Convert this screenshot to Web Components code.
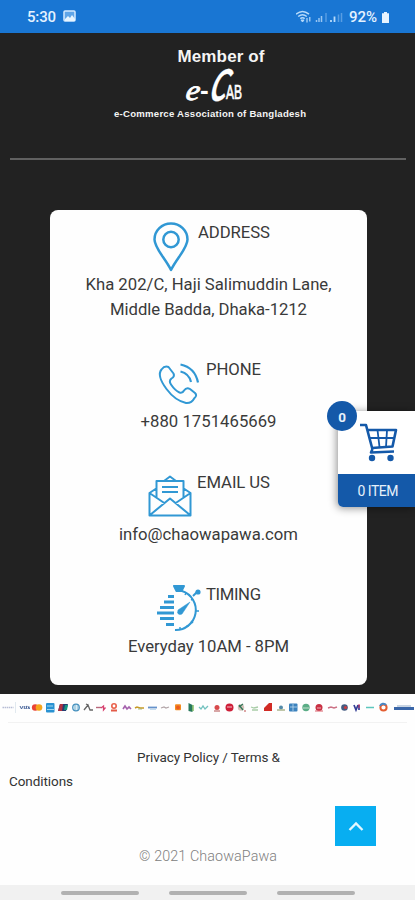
<!DOCTYPE html>
<html lang="en">
<head>
<meta charset="utf-8">
<title>ChaowaPawa</title>
<style>
html,body{margin:0;padding:0;height:900px;overflow:hidden;background:#fefefe;font-family:Roboto,"Liberation Sans",sans-serif;color:#333}
</style>
</head>
<body>
<app-screen></app-screen>
<script>
const define = (name, html, ready) => {
  const t = document.createElement('template');
  t.innerHTML = html;
  customElements.define(name, class extends HTMLElement {
    constructor() { super(); this.attachShadow({mode: 'open'}).append(t.content.cloneNode(true)); }
    connectedCallback() { if (ready) ready(this, this.shadowRoot); }
  });
};

// One line of text, tracked so that it spans the width given in "w".
define('fit-line', `<style>:host{display:block;white-space:nowrap;width:max-content}span{display:inline-block}</style><span><slot></slot></span>`, (el, root) => {
  const s = root.querySelector('span');
  const w = Number(el.getAttribute('w')), n = el.textContent.trim().length;
  const now = s.getBoundingClientRect().width;
  s.style.letterSpacing = ((w - now) / (n - 1)) + 'px';
  s.style.marginRight = (-(w - now) / (n - 1)) + 'px';
});

define('status-bar', `<style>
:host{display:flex;box-sizing:border-box;height:32.5px;padding:2px 25px 0 27px;background:#1976d3;color:#e4f2ff;align-items:center;justify-content:space-between;font-size:15px;font-weight:500}
div{display:flex;align-items:center}svg{display:block}
</style>
<div style="gap:7px"><fit-line w="29">5:30</fit-line>
<svg width="13" height="12" viewBox="0 0 13 12" style="margin-top:-2px"><rect x="1" y="1" width="11" height="10" rx="1" fill="#5fa5e8" stroke="#d5eaff" stroke-width="1.5"/><path d="M2 9l3-3 2 2 2-3 3 4v2H2z" fill="#e8f5ff"/></svg></div>
<div><svg width="49" height="16" viewBox="0 0 49 16" style="margin-right:4px" fill="none" stroke="#b6dafa">
<path d="M0 5.2Q6.5-.2 13 5.2M2.200 7.5Q6.5 4 10.800 7.5M4.300 9.6Q6.5 8 8.700 9.6" stroke-width="1.5"/><path d="M5 11h3l-1.5 2z" fill="#b6dafa"/><path d="M11 9v4.5M13.8 8v4.5" stroke-width="1.2"/>
<path d="M20.5 13v-2M23 13V9M25.5 13V7" stroke-width="1.5" opacity=".8"/><path d="M30 13V4" opacity=".45" stroke-width="1.3"/>
<path d="M35 13v-2M38.500 13V7.5" stroke-width="1.8"/><path d="M42.500 13V5.5M45.500 13V4" opacity=".4" stroke-width="1.5"/></svg>
<fit-line w="28">92%</fit-line>
<svg width="9" height="13" viewBox="0 0 9 13" style="margin-left:4px"><path d="M3 1h3v1.2h2V12H1V2.2h2z" fill="#e8f4ff"/></svg></div>`);

define('member-banner', `<style>
:host{display:flex;flex-direction:column;align-items:center;box-sizing:border-box;height:127.5px;padding-top:13px;margin:0 9px 0 10px;border-bottom:2px solid #616161;color:#f5f5f5;font-family:"Liberation Sans",sans-serif;font-weight:700}
.a{font-size:17px;line-height:21px;margin-left:26px}.c{font-size:9.6px;line-height:13px;margin-left:4px}
svg{display:block;margin-left:12px;overflow:visible}
</style>
<fit-line class="a" w="87">Member of</fit-line>
<svg width="60" height="40" viewBox="0 0 60 40" fill="#fff" stroke="#fff">
<text transform="translate(1 33) skewX(-8)" font-family="Liberation Serif" font-style="italic" font-weight="400" font-size="29" stroke-width=".9" textLength="14" lengthAdjust="spacingAndGlyphs">e</text>
<text x="16" y="32" font-family="Liberation Sans" font-weight="700" font-size="26" stroke-width="0">-</text>
<text transform="translate(24 34) skewX(-16) scale(.62 1)" font-family="Lato" font-style="italic" font-weight="700" font-size="44" stroke-width=".3">C</text>
<text x="42" y="32" font-family="Liberation Sans" font-weight="400" font-size="20" stroke-width=".7" textLength="16" lengthAdjust="spacingAndGlyphs">AB</text></svg>
<fit-line class="c" w="192">e-Commerce Association of Bangladesh</fit-line>`);

const ICONS = {
pin: `<svg width="36" height="50" viewBox="0 0 36 50" stroke-width="2.5"><path d="M18 48C12 36 1.5 26 1.5 17.5a16.5 16 0 0 1 33 0C34.5 26 24 36 18 48z"/><circle cx="18" cy="17.5" r="7.7"/></svg>`,
phone: `<svg width="41" height="42" viewBox="0 0 41 42" stroke-width="2"><path d="M3.5 6.5Q6.5 2.5 10.5 4L15.5 10.5Q17 13.5 13.5 15.5Q10.5 18 13 21.5Q17 27.5 21.5 29.5Q24.5 30.5 26 27.5Q28.5 24 32 26L37 30Q39.5 32.5 36.5 35Q33.5 40.5 28 40Q17 37.5 8.5 26Q-1.5 12.5 3.5 6.5z"/><path d="M22.5 1.5Q37 4.5 40 19.5M22.5 8.5Q31 10.5 33 19" stroke-width="2.2"/></svg>`,
mail: `<svg width="44" height="42" viewBox="0 0 44 42" stroke-width="2"><path d="M9 13L1.5 18V40.5H42.5V18L35 13M1.5 18L17 28.5M42.5 18L27 28.5M2 40L22 23.5L42 40M8.5 22.5V6H35.5V22.5M16 6L22 1.5L28 6M14 12H30M14 17H30"/></svg>`,
watch: `<svg width="46" height="48" viewBox="0 0 46 48" stroke-width="2"><path d="M18 2H28L25.5 7H20.5z" fill="#3198d4"/><path d="M26 7A20 20 0 0 1 19 46" stroke-width="2"/><path d="M37 12L41 8" stroke-width="2"/><circle cx="42" cy="8" r="1.6" fill="#3198d4"/><path d="M12 12.5H18M8 18H18M4 23.5H18M1 29H18M4 34.5H18M10 40.5H18" stroke-width="2.8"/><path d="M22 26L34 18L26 30Q23 31.5 21.5 29z" fill="#3198d4" stroke-width=".5"/><path d="M43 27h-3M37 15l-2 1M37 39l-2-2M24 46v-3M30 9l-1 2M32 43l-1-2" stroke-width="1.4"/></svg>`
};

define('contact-block', `<style>
:host{display:flex;flex-direction:column;align-items:center;font-size:16.7px;line-height:24.5px;color:#3a3a3a}
.h{align-self:flex-start;display:flex;height:52px;align-items:flex-start}
.i svg{display:block;fill:none;stroke:#3198d4;stroke-linejoin:round;overflow:visible}
</style><div class="h"><div class="i"></div><slot name="title"></slot></div><slot></slot>`, (el, root) => {
  const i = root.querySelector('.i');
  const [x, y, g] = el.getAttribute('place').split(' ');
  i.innerHTML = ICONS[el.getAttribute('icon')];
  i.style.padding = y + 'px ' + g + 'px 0 ' + x + 'px';
});

define('contact-card', `<style>
:host{display:flex;flex-direction:column;box-sizing:border-box;margin:50px 48px 9.5px 50px;height:475px;padding-top:11px;gap:36px;background:#fefefe;border-radius:8px}
</style><slot></slot>`);

define('cart-tab', `<style>
:host{position:absolute;left:337.5px;top:411px;width:77.5px;height:96px;border-radius:5px 0 0 5px;box-shadow:-1px 1px 9px rgba(0,0,0,.45);background:#fff;color:#e7f1fb;display:flex;flex-direction:column}
.p{height:63px;display:flex;box-sizing:border-box;padding:11px 0 0 21px}
.f{flex:1;background:#1459a9;border-radius:0 0 0 5px;display:flex;align-items:center;padding-left:20px;font-size:14px}
.b{position:absolute;left:-10.5px;top:-10px;width:30px;height:30px;border-radius:50%;background:#1459a9;display:grid;place-items:center;font-size:13.5px;font-weight:700;padding-top:1px;box-sizing:border-box}
</style><div class="p"><svg width="40" height="42" viewBox="0 0 40 42" fill="none" stroke="#1459a9" stroke-width="2.6" stroke-linejoin="round"><path d="M1 3H7L13.5 27.5M9 8H37L33.5 24.5L13 26M13.5 27L12 30.5L35 29.5" /><path d="M18.5 8L20.5 25M28 8L27 25M11 16H35.5" stroke-width="1.8"/><circle cx="13" cy="36" r="3.2" fill="#1459a9" stroke="none"/><circle cx="31.5" cy="36" r="3.2" fill="#1459a9" stroke="none"/></svg></div>
<div class="f"><fit-line w="41">0 ITEM</fit-line></div><div class="b">0</div>`);

define('pay-strip', `<style>
:host{display:block;height:28px;border-bottom:1px solid #f2f2f2;margin:0 8px}svg{display:block;margin-left:-8px}
</style><svg width="415" height="27" viewBox="0 0 415 27"></svg>`, (el, root) => {
  const c = (x, r, f) => `<circle cx="${x}" cy="13.5" r="${r}" fill="${f}"/>`;
  const r = (x, y, w, h, f) => `<rect x="${x}" y="${y}" width="${w}" height="${h}" rx="1" fill="${f}"/>`;
  const p = (d, s, w = 1.4) => `<path d="${d}" fill="none" stroke="${s}" stroke-width="${w}"/>`;
  root.querySelector('svg').innerHTML = [
    p('M2.5 13.5h11', '#b7bdd5', 1.5).replace('/>', ' stroke-dasharray="1.5 .6"/>'), p('M15.5 8v11', '#d4dfe8', .7),
    p('M20 12l1.5 3 1.5-3M24.3 12v3M27.5 12.4h-1.5l.8 2h-1.5M28 15l.8-2.5.7 2.5', '#48659b', 1),
    c(35.2, 3.3, '#e94336'), c(39, 3.3, '#f6a51b'),
    r(46, 9, 8.5, 9.5, '#2992d2'), p('M47 12h6M47 15.5h7', '#a5d7ee', 1),
    `<path d="M60 10h8l-2 7h-8z" fill="#263e72"/><path d="M60 10h3l-1 7h-4z" fill="#b13342"/><path d="M65 11h3l-1 5h-3z" fill="#169682"/>`,
    `<circle cx="76" cy="13.5" r="3.3" fill="#d9edf5" stroke="#438fbd" stroke-width="1.2"/>`, p('M75 11v5M78 11v5', '#5d9fc4', .7),
    p('M84 16l4-5 2 5 3 0M88 11l-2-1', '#666', 1.3),
    p('M96 13.5h5', '#b8677b'), p('M101 14l2.5-2v4l2-2.5', '#d7416f', 1.3),
    `<circle cx="114" cy="12" r="2.2" fill="#fff" stroke="#e9604a" stroke-width="1.6"/>`, p('M111 16.5h6', '#e35b48', 2),
    p('M123 15l2-3 2 3 2-2 2 2', '#a561ad', 1.6),
    p('M135 14l2-1 3 1 4 0', '#c79a27', 1.5), p('M138 15h4', '#9bae6b', .8),
    p('M148 13.5h9', '#6592cb', 1.8), p('M150 15.5h6', '#b4d3e9', .8),
    p('M161 14l3-1 2 1 3-1', '#b2a5a8', 1.3),
    r(175, 10.2, 6, 6, '#f28c20'), c(178, 2, '#eb5b21'),
    `<path d="M188.5 9l4 2v7l-4-1z" fill="#28795d"/>`, p('M193 11v6', '#72b44f', 1.3),
    p('M199 13l2 2 2-3 2 3 3-3', '#72c2bf', 1.3),
    c(217, 2.5, '#d84a4c'), p('M214 17h6', '#cb8889', 1.5),
    c(229.5, 4, '#ce1f38'), p('M227 13h5', '#f4c2ca', 1),
    c(241, 3.2, '#d5c3ba'), p('M239 11l4 5M243 10l-4 3', '#337859', 1.3), p('M244 17h2', '#bb4c4c', 1),
    p('M251 13l3 1 4-1M252 16h6', '#a9cda8', 1.3),
    `<path d="M264 14l5-5h3v8h-8z" fill="#d12b25"/>`,
    c(281, 2, '#538ba9'), p('M277 16h8', '#abb48d', 1.5),
    r(289, 9.5, 8.5, 8, '#3c82bd'), p('M293 10v7M290 13h7', '#bdd9ef', .8),
    c(306, 3.7, '#5bad86'), p('M303 14h6', '#c5dfcf', 1),
    c(319, 3.5, '#c93043'), p('M317 14h4', '#efb0b8', 1), p('M315 17h8', '#d9606d', 1),
    p('M328 14l3-1 3 1 3-1', '#cc7286', 1.5),
    c(344.5, 3.3, '#445b80'), c(345.5, 1.6, '#cc3e42'),
    p('M354 11l2 5 2-5M359 11v5', '#333d94', 1.7), p('M359 10v4', '#d33a64', 1),
    p('M366 13.5h8', '#5cc7bd', 1.5),
    `<circle cx="383.5" cy="13.5" r="3.1" fill="none" stroke="#e45e32" stroke-width="2"/>`, p('M380 12a3.5 3.5 0 0 1 6-1', '#4688c7', 2),
    p('M394 14.5h20', '#3a66a8', 3), p('M397 12h14', '#93abc8', 1)
  ].join('');
});

define('page-footer', `<style>
:host{display:flex;flex-direction:column;height:162px;color:#333;font-size:13.5px}
.l{display:flex;flex-direction:column;padding:22px 0 0 9px;line-height:24px;height:72.5px;box-sizing:border-box}
.l fit-line:first-child{margin-left:128px}
.u{width:40.5px;height:40.5px;background:#08aef1;margin:10px 0 0 335.3px;display:grid;place-items:center}
.c{font-size:14.3px;color:#808080;margin-left:139px;line-height:20px;font-weight:300}
</style><div class="l"><fit-line w="143">Privacy Policy / Terms &amp;</fit-line><fit-line w="64">Conditions</fit-line></div>
<div class="u"><svg width="16" height="12" viewBox="0 0 16 12"><path d="M1.5 10L8 3.5L14.5 10" fill="none" stroke="#e2f7ff" stroke-width="2.3"/></svg></div>
<fit-line class="c" w="138">© 2021 ChaowaPawa</fit-line>`);

define('nav-pills', `<style>:host{display:flex;height:15px;background:#f1f1f1;box-sizing:border-box;padding:6px 0 0 61px;gap:30.5px}i{width:77.5px;height:4px;border-radius:2px;background:#b1b1b1}</style><i></i><i></i><i></i>`);

define('app-screen', `<style>
:host{display:flex;flex-direction:column;position:relative;width:415px;height:900px;overflow:hidden;background:#fefefe}
main{background:#222;height:661.5px;flex:none;display:flow-root}
nav-pills{margin-top:auto}
</style>
<status-bar></status-bar>
<main><member-banner></member-banner>
<contact-card>
<contact-block icon="pin" place="103 1 9"><fit-line slot="title" w="72">ADDRESS</fit-line><fit-line w="246">Kha 202/C, Haji Salimuddin Lane,</fit-line><fit-line w="197">Middle Badda, Dhaka-1212</fit-line></contact-block>
<contact-block icon="phone" place="108 5 7"><fit-line slot="title" w="55">PHONE</fit-line><fit-line w="136">+880 1751465669</fit-line></contact-block>
<contact-block icon="mail" place="98 4.5 5"><fit-line slot="title" w="73">EMAIL US</fit-line><fit-line w="179">info@chaowapawa.com</fit-line></contact-block>
<contact-block icon="watch" place="106 1 4"><fit-line slot="title" w="55">TIMING</fit-line><fit-line w="161">Everyday 10AM - 8PM</fit-line></contact-block>
</contact-card></main>
<pay-strip></pay-strip><page-footer></page-footer><nav-pills></nav-pills><cart-tab></cart-tab>`);
</script>
</body>
</html>
